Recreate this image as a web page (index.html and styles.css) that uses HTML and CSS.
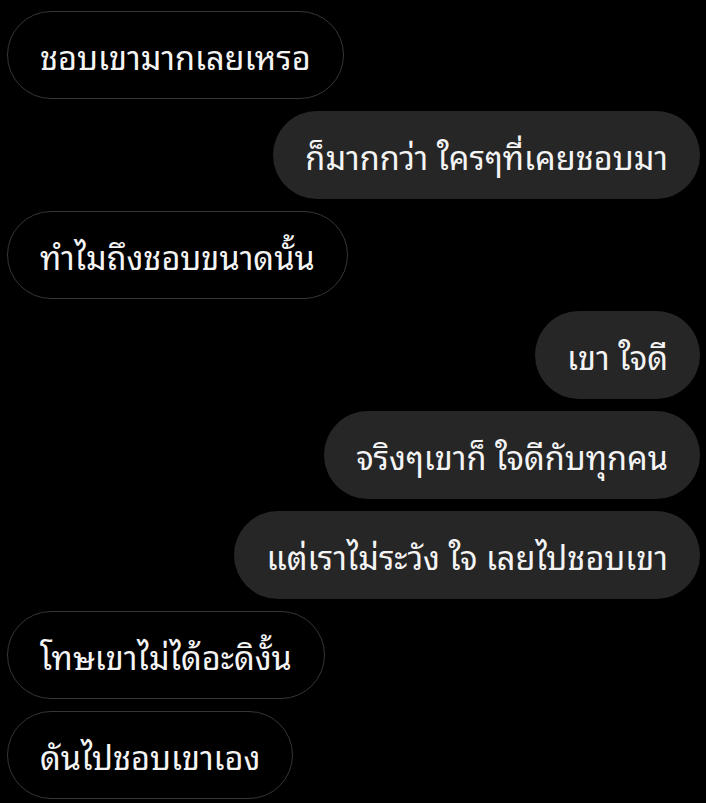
FILE: index.html
```html
<!DOCTYPE html>
<html lang="th">
<head>
  <meta charset="UTF-8">
  <meta name="viewport" content="width=device-width, initial-scale=1.0">
  <title>Chat</title>
  <link rel="stylesheet" href="styles.css">
</head>
<body>
  <div class="thread">
    <div class="msg them">ชอบเขามากเลยเหรอ</div>
    <div class="msg me">ก็มากกว่า ใครๆที่เคยชอบมา</div>
    <div class="msg them">ทำไมถึงชอบขนาดนั้น</div>
    <div class="msg me">เขา ใจดี</div>
    <div class="msg me">จริงๆเขาก็ ใจดีกับทุกคน</div>
    <div class="msg me">แต่เราไม่ระวัง ใจ เลยไปชอบเขา</div>
    <div class="msg them">โทษเขาไม่ได้อะดิงั้น</div>
    <div class="msg them">ดันไปชอบเขาเอง</div>
  </div>
</body>
</html>
```

FILE: styles.css
```css
html, body {
  margin: 0;
  background: #000;
}
body {
  font-family: "Noto Sans Thai Looped", "Noto Sans", sans-serif;
  color: #f4f4f4;
}
.thread {
  display: flex;
  flex-direction: column;
  gap: 12px;
  padding: 11px 6px 0 7px;
}
.msg {
  box-sizing: border-box;
  height: 88px;
  display: flex;
  align-items: center;
  padding: 0 32px;
  border-radius: 44px;
  font-size: 32.5px;
  white-space: nowrap;
}
.them {
  align-self: flex-start;
  border: 1px solid #363636;
}
.me {
  align-self: flex-end;
  background: #262626;
}
```
